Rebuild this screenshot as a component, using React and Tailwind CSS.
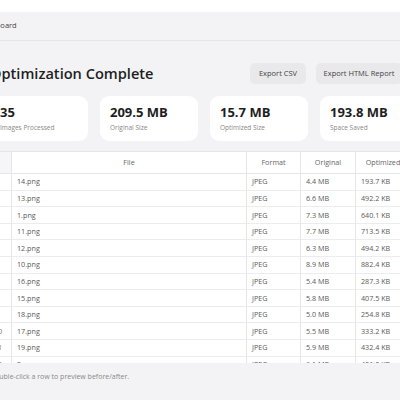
const stats = [
    { value: "35", label: "Images Processed" },
    { value: "209.5 MB", label: "Original Size" },
    { value: "15.7 MB", label: "Optimized Size" },
    { value: "193.8 MB", label: "Space Saved" },
];

const rows = [
    ["14.png", "4.4 MB", "193.7 KB"],
    ["13.png", "6.6 MB", "492.2 KB"],
    ["1.png", "7.3 MB", "640.1 KB"],
    ["11.png", "7.7 MB", "713.5 KB"],
    ["12.png", "6.3 MB", "494.2 KB"],
    ["10.png", "8.9 MB", "882.4 KB"],
    ["16.png", "5.4 MB", "287.3 KB"],
    ["15.png", "5.8 MB", "407.5 KB"],
    ["18.png", "5.0 MB", "254.8 KB"],
    ["17.png", "5.5 MB", "333.2 KB"],
    ["19.png", "5.9 MB", "432.4 KB"],
    ["2.png", "6.1 MB", "401.0 KB"],
];

const App = () => {
    return (
        <div className="w-[400px] h-[400px] overflow-hidden bg-[#f3f3f5] text-[#1f1f1f]" style={{ fontFamily: '"Open Sans", "Noto Sans", sans-serif' }}>
            <div className="h-[12px] bg-white" />
            <div className="ml-[-22px] w-[470px]">
                <div className="h-[29px] flex items-center border-b border-[#e6e6e8] text-[7.5px] text-[#444]">
                    <span>Dashboard</span>
                </div>

                <div className="px-[12px]">
                    <div className="mt-[22px] h-[21px] flex items-center">
                        <h1 className="text-[14.6px] font-semibold text-[#1e1e1e] mt-[1px]">Optimization Complete</h1>
                        <div className="ml-auto mr-[34px] flex gap-[10px]">
                            <button className="h-[21px] w-[56px] rounded-[5px] bg-[#e9e9eb] text-[7.5px] text-[#444]">Export CSV</button>
                            <button className="h-[21px] w-[86px] rounded-[5px] bg-[#e9e9eb] text-[7.5px] text-[#444]">Export HTML Report</button>
                        </div>
                    </div>

                    <div className="mt-[12px] flex gap-[12px]">
                        {stats.map((s) => (
                            <div key={s.label} className="w-[98px] h-[45px] rounded-[9px] bg-white px-[10px] pt-[7px]">
                                <div className="text-[13px] font-bold leading-[18px] text-[#1e1e1e]">{s.value}</div>
                                <div className="mt-[2px] text-[6.5px] text-[#888]">{s.label}</div>
                            </div>
                        ))}
                    </div>

                    <div className="mt-[10px] bg-white border-t border-[#e6e6e8] text-[7.2px] text-[#5a5a5a]">
                        <div className="flex h-[22px] border-b border-[#e6e6e8] text-[#666]">
                            <div className="w-[22px] bg-[#f6f6f8] border-r border-[#e6e6e8]" />
                            <div className="w-[235px] flex items-center justify-center border-r border-[#e6e6e8]">File</div>
                            <div className="w-[54px] flex items-center justify-center border-r border-[#e6e6e8]">Format</div>
                            <div className="w-[55px] flex items-center justify-center border-r border-[#e6e6e8]">Original</div>
                            <div className="w-[54px] flex items-center justify-center">Optimized</div>
                        </div>
                        <div className="h-[189px] overflow-hidden">
                            {rows.map((r, i) => (
                                <div key={r[0]} className="flex h-[16.6px] border-b border-[#ececee]">
                                    <div className="w-[22px] flex items-center pl-[4px] text-[#777] border-r border-[#e6e6e8]">{i + 1}</div>
                                    <div className="w-[235px] flex items-center pl-[5px] border-r border-[#e6e6e8]">{r[0]}</div>
                                    <div className="w-[54px] flex items-center pl-[5px] border-r border-[#e6e6e8]">JPEG</div>
                                    <div className="w-[55px] flex items-center pl-[5px] border-r border-[#e6e6e8]">{r[1]}</div>
                                    <div className="w-[54px] flex items-center pl-[5px]">{r[2]}</div>
                                </div>
                            ))}
                        </div>
                    </div>

                    <div className="mt-[9px] text-[7px] text-[#888]">Double-click a row to preview before/after.</div>
                </div>
            </div>
        </div>
    );
};

export default App;
